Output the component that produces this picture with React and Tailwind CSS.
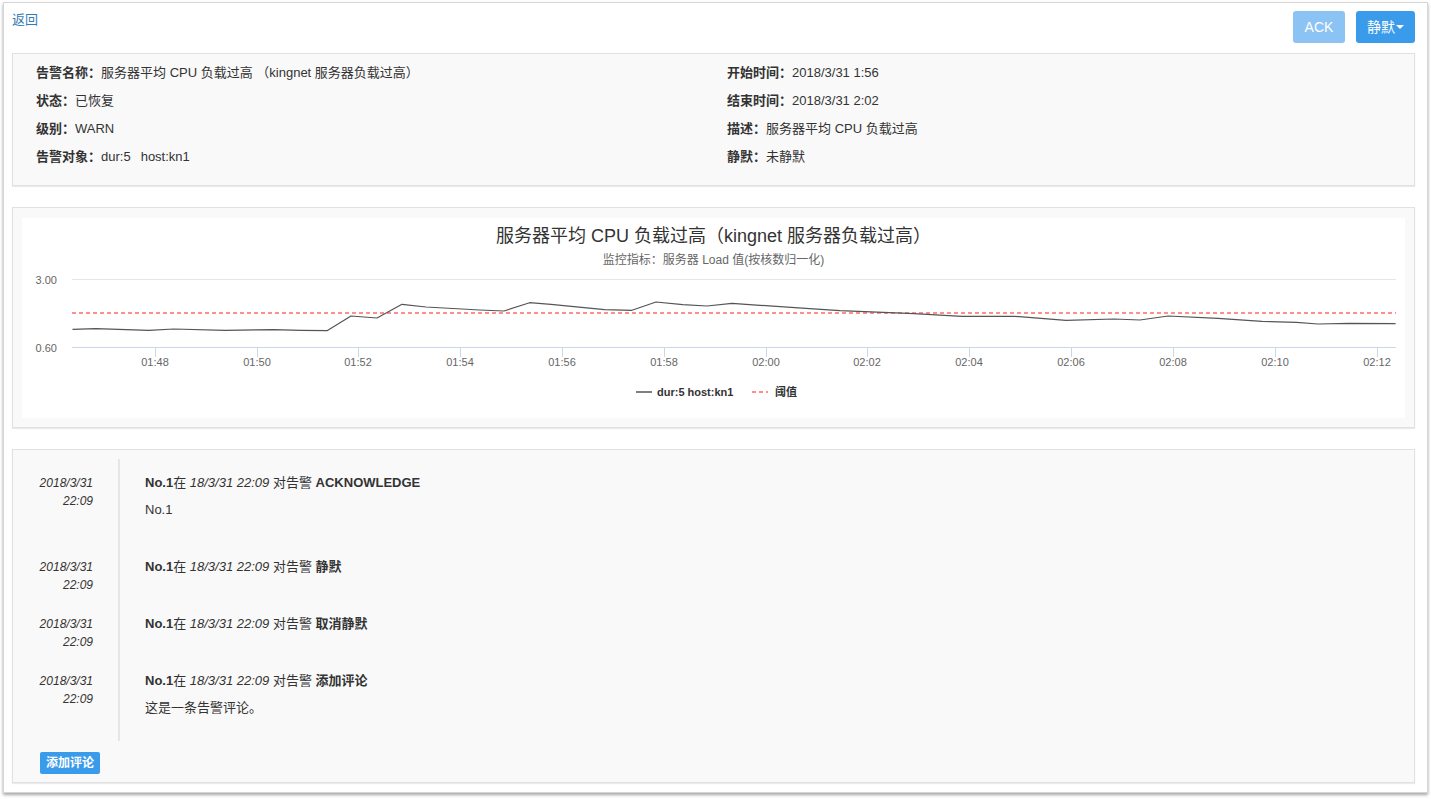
import React from "react";

const points = [
    [50.5, 111.3], [73.7, 110.7], [127, 112.3], [151.8, 111], [203, 112.3], [252, 111.7],
    [279, 112.3], [305, 112.7], [329, 98], [355, 100], [380, 86.3], [404, 89], [457.6, 92],
    [482, 93], [507.6, 84.7], [529, 86.3], [582.6, 91.7], [610, 92.3], [634, 84], [660.8, 86.7],
    [685, 88], [710, 85.3], [738, 87.3], [787.6, 90.7], [818, 92.7], [892, 95.7], [939.7, 98.3],
    [992, 98.3], [1044, 102.3], [1092, 101], [1118, 102], [1146, 98], [1196, 100.3], [1240, 103.3],
    [1274.5, 104.3], [1296, 106], [1326.7, 105.3], [1373.6, 105.7],
];

const ticks = [
    [133, "01:48"], [235, "01:50"], [336, "01:52"], [438, "01:54"], [540, "01:56"], [642, "01:58"],
    [744, "02:00"], [845, "02:02"], [947, "02:04"], [1049, "02:06"], [1151, "02:08"], [1253, "02:10"],
    [1355, "02:12"],
];

const leftInfo = [
    ["告警名称：", "服务器平均 CPU 负载过高 （kingnet 服务器负载过高）"],
    ["状态：", "已恢复"],
    ["级别：", "WARN"],
];

const rightInfo = [
    ["开始时间：", "2018/3/31 1:56"],
    ["结束时间：", "2018/3/31 2:02"],
    ["描述：", "服务器平均 CPU 负载过高"],
    ["静默：", "未静默"],
];

const history = [
    { action: "ACKNOWLEDGE", body: "No.1" },
    { action: "静默" },
    { action: "取消静默" },
    { action: "添加评论", body: "这是一条告警评论。" },
];

const Chart = () => (
    <svg width="1383" height="200" viewBox="0 0 1383 200" className="block">
        <text x="691.5" y="18" textAnchor="middle" dominantBaseline="central" fontSize="18" fill="#333">
            服务器平均 CPU 负载过高（kingnet 服务器负载过高）
        </text>
        <text x="691.5" y="42" textAnchor="middle" dominantBaseline="central" fontSize="12" fill="#666">
            监控指标：服务器 Load 值(按核数归一化)
        </text>

        <line x1="50" y1="61.5" x2="1374" y2="61.5" stroke="#e6e6e6" strokeWidth="1" />
        <text x="35" y="62" textAnchor="end" dominantBaseline="central" fontSize="11" fill="#666">3.00</text>
        <text x="35" y="130" textAnchor="end" dominantBaseline="central" fontSize="11" fill="#666">0.60</text>

        <line x1="50" y1="95" x2="1374" y2="95" stroke="#ff6b6b" strokeWidth="1.6" strokeDasharray="4 3" />
        <polyline
            points={points.map((p) => p.join(",")).join(" ")}
            fill="none"
            stroke="#555"
            strokeWidth="1.2"
            strokeLinejoin="round"
        />

        <line x1="50" y1="129.5" x2="1374" y2="129.5" stroke="#ccd6eb" strokeWidth="1" />
        {ticks.map(([x, label]) => (
            <g key={label}>
                <line x1={x + 0.5} y1="129" x2={x + 0.5} y2="139" stroke="#ccd6eb" strokeWidth="1" />
                <text x={x} y="144" textAnchor="middle" dominantBaseline="central" fontSize="11" fill="#666">
                    {label}
                </text>
            </g>
        ))}

        <line x1="614" y1="174" x2="630" y2="174" stroke="#555" strokeWidth="1.5" />
        <text x="635" y="174" dominantBaseline="central" fontSize="11" fontWeight="bold" fill="#333">
            dur:5 host:kn1
        </text>
        <line x1="730" y1="174" x2="746" y2="174" stroke="#ff6b6b" strokeWidth="1.5" strokeDasharray="4 3" />
        <text x="753" y="174" dominantBaseline="central" fontSize="11" fontWeight="bold" fill="#333">
            阈值
        </text>
    </svg>
);

const Panel = ({ className = "", children }) => (
    <div className={`bg-[#f9f9f9] border border-[#e1e1e1] shadow-[0_1px_1px_rgba(0,0,0,0.08)] ${className}`}>
        {children}
    </div>
);

const App = () => {
    return (
        <div className="w-[1431px] h-[799px] bg-white overflow-hidden font-['Liberation_Sans','Noto_Sans_CJK_SC',sans-serif] text-[#333]">
            <div className="ml-[3px] mt-[2px] w-[1425px] h-[791px] bg-white border border-[#d6d6d6] shadow-[0_2px_3px_rgba(0,0,0,0.35)] pl-[8px] pr-[12px] pt-[8px]">
                {/* header */}
                <div className="flex items-start justify-between h-[32px]">
                    <a href="#" className="mt-[1px] text-[13px] leading-[16px] text-[#337ab7]">返回</a>
                    <div className="flex gap-[11px]">
                        <button className="h-[32px] w-[52px] rounded-[3px] bg-[#8bc3f4] text-white text-[14px]">ACK</button>
                        <button className="h-[32px] w-[59px] rounded-[3px] bg-[#3a9bea] text-white text-[14px] flex items-center justify-center">
                            静默
                            <span className="inline-block w-0 h-0 border-x-[4px] border-x-transparent border-t-[4px] border-t-white ml-[1px]" />
                        </button>
                    </div>
                </div>

                {/* alert info */}
                <Panel className="mt-[10px] pt-[5px] pb-[14px] pl-[23px]">
                    <div className="grid grid-cols-[691px_1fr] text-[13px] leading-[28px]">
                        <div>
                            {leftInfo.map(([k, v]) => (
                                <div key={k} className="h-[28px] whitespace-nowrap">
                                    <span className="font-bold">{k}</span>
                                    {v}
                                </div>
                            ))}
                            <div className="h-[28px] whitespace-nowrap">
                                <span className="font-bold">告警对象：</span>
                                dur:5<span className="ml-[10px]">host:kn1</span>
                            </div>
                        </div>
                        <div>
                            {rightInfo.map(([k, v]) => (
                                <div key={k} className="h-[28px] whitespace-nowrap">
                                    <span className="font-bold">{k}</span>
                                    {v}
                                </div>
                            ))}
                        </div>
                    </div>
                </Panel>

                {/* chart */}
                <Panel className="mt-[21px] pt-[10px] pb-[9px] px-[9px]">
                    <div className="bg-white">
                        <Chart />
                    </div>
                </Panel>

                {/* history */}
                <Panel className="mt-[21px] pt-[9px] pb-[8px]">
                    <div>
                        {history.map((h, i) => (
                            <div key={i} className="flex">
                                <div className="w-[80px] shrink-0 pt-[15px] text-right italic text-[12px] leading-[18px]">
                                    <div>2018/3/31</div>
                                    <div>22:09</div>
                                </div>
                                <div className="ml-[25px] border-l-2 border-[#e6e6e6] pl-[25px] pt-[15px] pb-[24px] text-[13px] leading-[18px]">
                                    <div className="whitespace-nowrap">
                                        <span className="font-bold">No.1</span>在 <i>18/3/31 22:09</i> 对告警{" "}
                                        <span className="font-bold">{h.action}</span>
                                    </div>
                                    {h.body && <div className="mt-[9px]">{h.body}</div>}
                                </div>
                            </div>
                        ))}
                    </div>
                    <div className="flex pl-[27px] mt-[11px]">
                        <button className="h-[22px] px-[6px] rounded-[2px] bg-[#3a9bea] text-white text-[12px] font-bold leading-[22px]">
                            添加评论
                        </button>
                    </div>
                </Panel>
            </div>
        </div>
    );
};

export default App;
